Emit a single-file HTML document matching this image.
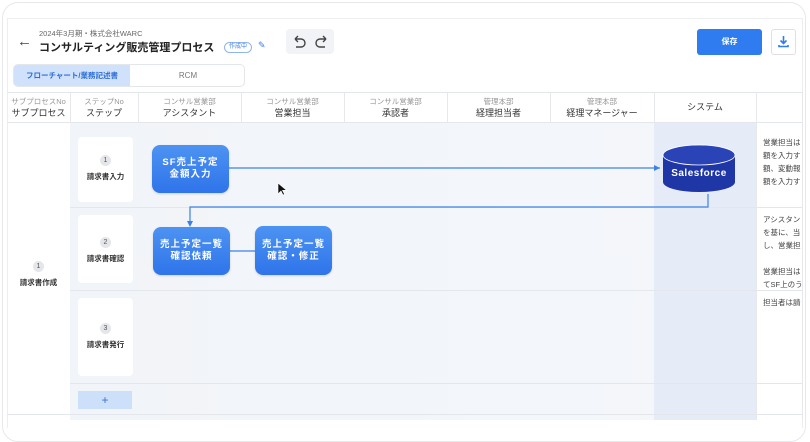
<!DOCTYPE html>
<html><head><meta charset="utf-8"><style>
*{margin:0;padding:0;box-sizing:border-box}
body{width:810px;height:420px;overflow:hidden;background:#fff;font-family:"Liberation Sans","Noto Sans CJK JP",sans-serif;position:relative;color:#222}
.abs{position:absolute}
.outer{left:2px;top:2px;width:804px;height:440px;border:1px solid #e6e8ec;border-radius:16px}
.inner{left:7px;top:18px;width:796px;height:410px;border:1px solid #eceef2;border-bottom:none}
.hd{font-size:7.5px;color:#999;text-align:center;line-height:10px;white-space:nowrap}
.hd b{display:block;font-weight:normal;color:#333;font-size:9px;line-height:13px}
.vl{width:1px;background:#e6e8ec}
.hl{height:1px;background:#e3e6eb}
.box{background:linear-gradient(#4d93f2,#2f74ea);border-radius:8px;color:#fff;font-size:9.5px;font-weight:bold;text-align:center;display:flex;align-items:center;justify-content:center;line-height:12px;letter-spacing:1px;box-shadow:0 1px 2px rgba(0,0,0,.15)}
.step{background:#fff;border-radius:4px;text-align:center;font-size:7.5px;font-weight:bold;color:#333;white-space:nowrap}
.num{width:11px;height:11px;border-radius:50%;background:#e4e6ea;font-size:7px;line-height:11px;margin:0 auto 5px;font-weight:normal;color:#555}
.note{font-size:7.5px;color:#444;line-height:13px;white-space:nowrap;overflow:hidden}
</style></head><body>
<div class="abs outer"></div>
<div class="abs inner"></div>
<div class="abs" style="left:17px;top:33px;font-size:15px;color:#444">←</div>
<div class="abs" style="left:39px;top:28px;font-size:7.5px;color:#666;white-space:nowrap">2024年3月期・株式会社WARC</div>
<div class="abs" style="left:39px;top:39px;font-size:11px;font-weight:bold;color:#222;white-space:nowrap">コンサルティング販売管理プロセス</div>
<div class="abs" style="left:224px;top:42px;font-size:6px;color:#3a7de8;border:1px solid #8fb5f0;border-radius:8px;padding:0 4px;line-height:9px;white-space:nowrap">作成中</div>
<div class="abs" style="left:258px;top:40px;font-size:9px;color:#3a7de8">✎</div>
<div class="abs" style="left:286px;top:29px;width:48px;height:25px;background:#f1f3f6;border-radius:4px"></div>
<svg class="abs" style="left:292px;top:35px" width="40" height="14" viewBox="0 0 40 14"><path d="M3 4h6a4 4 0 0 1 0 8H4M3 4l3-3M3 4l3 3" fill="none" stroke="#444" stroke-width="1.4"/><path d="M34 4h-6a4 4 0 0 0 0 8h5M34 4l-3-3M34 4l-3 3" fill="none" stroke="#444" stroke-width="1.4"/></svg>
<div class="abs" style="left:697px;top:29px;width:65px;height:26px;background:#2f7cf0;border-radius:3px;color:#fff;font-size:8px;font-weight:bold;text-align:center;line-height:26px">保存</div>
<div class="abs" style="left:771px;top:29px;width:25px;height:26px;border:1px solid #dde0e5;border-radius:3px"></div>
<svg class="abs" style="left:777px;top:35px" width="13" height="13" viewBox="0 0 13 13"><path d="M6.5 1v7M3.5 5.5l3 3 3-3M2 10v1.5h9V10" fill="none" stroke="#2f7cf0" stroke-width="1.6"/></svg>
<div class="abs" style="left:13px;top:64px;width:232px;height:23px;border:1px solid #e3e6ea;border-radius:5px;overflow:hidden">
<div style="position:absolute;left:0;top:0;width:116px;height:23px;background:#cfe1fb;color:#2f6fd6;font-size:7.5px;font-weight:bold;text-align:center;line-height:21px">フローチャート/業務記述書</div>
<div style="position:absolute;left:116px;top:0;width:116px;height:23px;color:#777;font-size:8px;text-align:center;line-height:21px">RCM</div></div>
<div class="abs hl" style="left:7px;top:92px;width:796px"></div>
<div class="abs" style="left:70px;top:123px;width:686px;height:297px;background:linear-gradient(90deg,#f1f4f8,#f4f7fb)"></div>
<div class="abs" style="left:654px;top:123px;width:102px;height:297px;background:#e6ecf7"></div>
<div class="abs hl" style="left:7px;top:122px;width:796px"></div>
<div class="abs hl" style="left:70px;top:207px;width:733px"></div>
<div class="abs hl" style="left:70px;top:290px;width:733px"></div>
<div class="abs hl" style="left:70px;top:383px;width:733px"></div>
<div class="abs hl" style="left:7px;top:414px;width:796px"></div>
<div class="abs vl" style="left:70px;top:93px;height:30px"></div>
<div class="abs vl" style="left:138px;top:93px;height:30px"></div>
<div class="abs vl" style="left:241px;top:93px;height:30px"></div>
<div class="abs vl" style="left:344px;top:93px;height:30px"></div>
<div class="abs vl" style="left:447px;top:93px;height:30px"></div>
<div class="abs vl" style="left:550px;top:93px;height:30px"></div>
<div class="abs vl" style="left:654px;top:93px;height:30px"></div>
<div class="abs vl" style="left:756px;top:93px;height:327px"></div>
<div class="abs vl" style="left:802px;top:93px;height:327px"></div>
<div class="abs hd" style="left:7px;top:97px;width:63px">サブプロセスNo<b>サブプロセス</b></div>
<div class="abs hd" style="left:70px;top:97px;width:68px">ステップNo<b>ステップ</b></div>
<div class="abs hd" style="left:138px;top:97px;width:103px">コンサル営業部<b>アシスタント</b></div>
<div class="abs hd" style="left:241px;top:97px;width:103px">コンサル営業部<b>営業担当</b></div>
<div class="abs hd" style="left:344px;top:97px;width:103px">コンサル営業部<b>承認者</b></div>
<div class="abs hd" style="left:447px;top:97px;width:103px">管理本部<b>経理担当者</b></div>
<div class="abs hd" style="left:550px;top:97px;width:104px">管理本部<b>経理マネージャー</b></div>
<div class="abs hd" style="left:654px;top:101px;width:102px"><b>システム</b></div>
<div class="abs step" style="left:7px;top:261px;width:63px;background:none"><div class="num">1</div>請求書作成</div>
<div class="abs step" style="left:78px;top:137px;width:55px;height:65px;padding-top:18px"><div class="num">1</div>請求書入力</div>
<div class="abs step" style="left:78px;top:215px;width:55px;height:68px;padding-top:22px"><div class="num">2</div>請求書確認</div>
<div class="abs step" style="left:78px;top:298px;width:55px;height:78px;padding-top:25px"><div class="num">3</div>請求書発行</div>
<div class="abs" style="left:78px;top:391px;width:54px;height:18px;background:#cde0fa;color:#3a72d0;text-align:center;font-size:12px;line-height:18px">+</div>
<svg class="abs" style="left:0;top:0" width="810" height="420">
<path d="M229 168H660" stroke="#3b82e6" stroke-width="1.2" fill="none"/>
<path d="M660 168l-6-3v6z" fill="#3b82e6"/>
<path d="M708 194V207H190V224" stroke="#3b82e6" stroke-width="1.2" fill="none"/>
<path d="M190 227l-3-6h6z" fill="#3b82e6"/>
<path d="M229 251H256" stroke="#3b82e6" stroke-width="1.2"/>
<ellipse cx="699" cy="182" rx="36" ry="10" fill="#1f36a6"/>
<rect x="663" y="155" width="72" height="27" fill="#1f36a6"/>
<ellipse cx="699" cy="155" rx="36" ry="10" fill="#2a44b8" stroke="#fff" stroke-width="0.8"/>
<text x="699" y="176" fill="#fff" font-size="10" font-weight="bold" text-anchor="middle" font-family="Liberation Sans,sans-serif" letter-spacing="0.5">Salesforce</text>
<path d="M278 183v11l3-3 2 4 1.5-.7-2-4h4z" fill="#111" stroke="#fff" stroke-width=".6"/>
</svg>
<div class="abs box" style="left:152px;top:145px;width:77px;height:48px">SF売上予定<br>金額入力</div>
<div class="abs box" style="left:153px;top:227px;width:77px;height:48px">売上予定一覧<br>確認依頼</div>
<div class="abs box" style="left:255px;top:226px;width:77px;height:49px">売上予定一覧<br>確認・修正</div>
<div class="abs note" style="left:763px;top:136px;width:39px">営業担当は<br>額を入力す<br>額、変動報<br>額を入力す</div>
<div class="abs note" style="left:763px;top:213px;width:39px">アシスタン<br>を基に、当<br>し、営業担<br><br>営業担当は<br>てSF上のう</div>
<div class="abs note" style="left:763px;top:296px;width:39px">担当者は請</div>
</body></html>
